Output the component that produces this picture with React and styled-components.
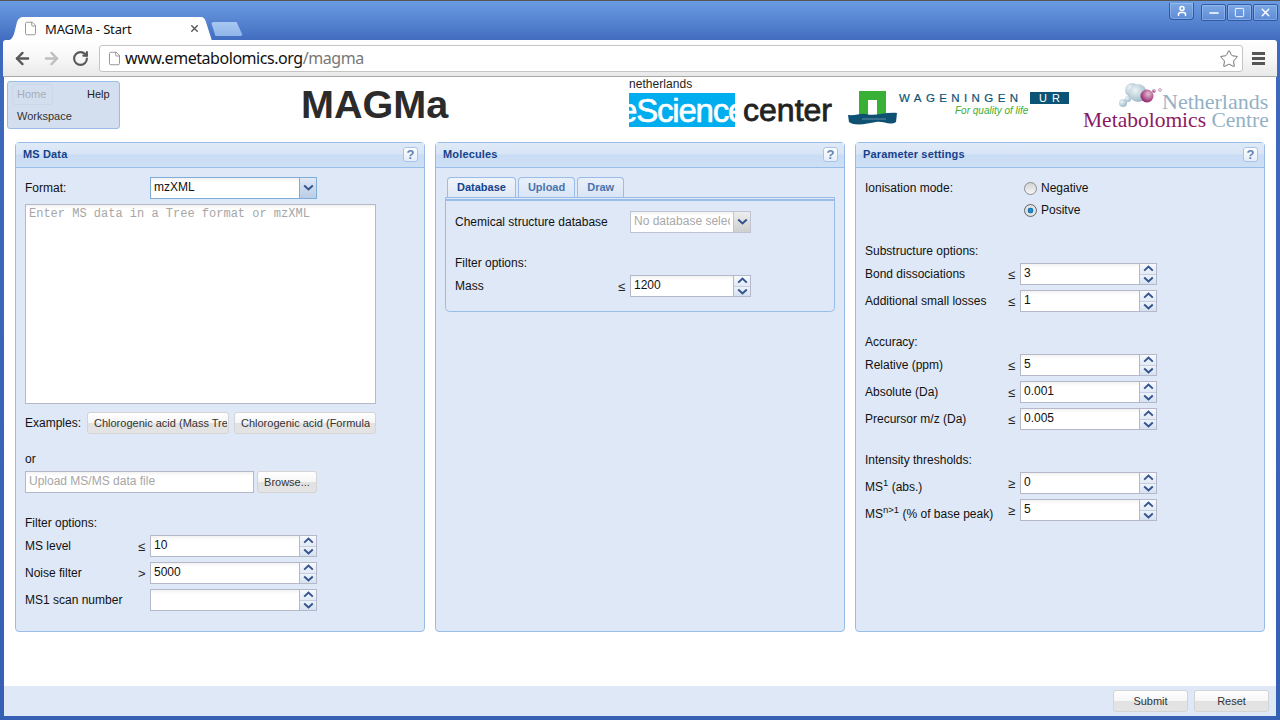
import React from "react";
import styled, { createGlobalStyle } from "styled-components";
import { ArrowLeft, ArrowRight, RotateCw, Star, File, User, Minus, Square, X } from "lucide-react";

const GlobalStyle = createGlobalStyle`
  html, body { margin: 0; padding: 0; overflow: hidden; background: #fff; }
  * { box-sizing: border-box; }
  body { font: 12px "Liberation Sans", Arial, sans-serif; color: #111; }
`;

const Chevron = ({ up, size = 11 }) => (
  <svg width={size} height={size * 0.64} viewBox="0 0 11 7">
    <path d={up ? "M1.2 5.6 L5.5 1.6 L9.8 5.6" : "M1.2 1.4 L5.5 5.4 L9.8 1.4"} fill="none" stroke="#34548f" strokeWidth="2" />
  </svg>
);

const HelpButton = () => <Help>?</Help>;

const SpinField = ({ value, width = 167 }) => (
  <FieldBox $w={width}>
    <FieldText>{value}</FieldText>
    <Spinner>
      <SpinPart><Chevron up /></SpinPart>
      <SpinPart $lower><Chevron /></SpinPart>
    </Spinner>
  </FieldBox>
);

const Row = ({ label, sign, value, labelWidth, width, low }) => (
  <RowWrap $top={5}>
    <RowLabel $w={labelWidth} $low={low}>{label}</RowLabel>
    <Sign>{sign}</Sign>
    <SpinField value={value} width={width} />
  </RowWrap>
);

const Panel = ({ title, children }) => (
  <PanelBox>
    <PanelHead>
      <PanelTitle>{title}</PanelTitle>
      <HelpButton />
    </PanelHead>
    {children}
  </PanelBox>
);

export default function App() {
  return (
    <Frame>
      <GlobalStyle />
      <TabStrip>
        <BrowserTab>
          <File size={15} strokeWidth={1.2} color="#777" fill="#fff" />
          <TabTitle>MAGMa - Start</TabTitle>
          <X size={11} strokeWidth={3} color="#555" />
        </BrowserTab>
        <NewTab />
        <WindowControls>
          <ProfileBtn><User size={12} strokeWidth={3} color="#fff" /></ProfileBtn>
          <WinBtn><Minus size={14} strokeWidth={2.5} color="#fff" /></WinBtn>
          <WinBtn><Square size={11} strokeWidth={2} color="#fff" /></WinBtn>
          <WinBtn><X size={13} strokeWidth={2.5} color="#fff" /></WinBtn>
        </WindowControls>
      </TabStrip>

      <Toolbar>
        <NavIcon><ArrowLeft size={19} strokeWidth={3} color="#595959" /></NavIcon>
        <NavIcon><ArrowRight size={19} strokeWidth={3} color="#bfbfbf" /></NavIcon>
        <NavIcon><RotateCw size={17} strokeWidth={3} color="#595959" /></NavIcon>
        <Omnibox>
          <File size={15} strokeWidth={1.2} color="#777" />
          <Url>www.emetabolomics.org<UrlPath>/magma</UrlPath></Url>
          <Star size={20} strokeWidth={1.1} color="#666" />
        </Omnibox>
        <Burger><i /><i /><i /></Burger>
      </Toolbar>

      <Page>
        <Header>
          <Menu>
            <HomeItem>Home</HomeItem>
            <HelpItem>Help</HelpItem>
            <WorkspaceItem>Workspace</WorkspaceItem>
          </Menu>
          <AppTitle>MAGMa</AppTitle>
          <EScience>
            <EsTop>netherlands</EsTop>
            <EsLine>
              <EsBox><EsWord>eScience</EsWord></EsBox>
              <EsCenter>center</EsCenter>
            </EsLine>
          </EScience>
          <Wur>
            <svg width="50" height="35" viewBox="0 0 50 35">
              <path d="M11 0 H38 V24 H29 V9 H20 V24 H11 Z" fill="#38b035" />
              <path d="M0 24 C8 25 14 21 20 23.500 C28 25 38 21 49 22 L48 31 C42 35 36 30 28 31 C20 32 8 36 1 31 Z" fill="#0f5173" />
              <path d="M14 28 H38" stroke="#fff" strokeWidth="0.6" opacity="0.6" />
            </svg>
            <WurText>
              <WurTop>
                <WurName>WAGENINGEN</WurName>
                <WurBadge>UR</WurBadge>
              </WurTop>
              <WurSlogan>For quality of life</WurSlogan>
            </WurText>
          </Wur>
          <Nmc>
            <NmcBubbles>
              <svg width="48" height="30" viewBox="0 0 48 30">
                <defs>
                  <radialGradient id="ball" cx="35%" cy="35%" r="70%">
                    <stop offset="0" stopColor="#eef3f6" />
                    <stop offset="1" stopColor="#9db8c8" />
                  </radialGradient>
                  <radialGradient id="plum" cx="60%" cy="35%" r="70%">
                    <stop offset="0" stopColor="#e7bdd5" />
                    <stop offset="1" stopColor="#8b1a63" />
                  </radialGradient>
                </defs>
                <circle cx="6" cy="21" r="4" fill="url(#ball)" />
                <circle cx="11" cy="17" r="3" fill="url(#ball)" />
                <circle cx="15" cy="8" r="7" fill="url(#ball)" />
                <circle cx="21" cy="11" r="9" fill="url(#ball)" />
                <circle cx="30" cy="14" r="6.5" fill="url(#plum)" />
                <circle cx="37" cy="9" r="1.8" fill="url(#plum)" />
                <circle cx="43" cy="8" r="1.4" fill="none" stroke="#b56a98" strokeWidth="0.7" />
              </svg>
            </NmcBubbles>
            <NmcTop>Netherlands</NmcTop>
            <NmcBottom><NmcPlum>Metabolomics</NmcPlum> Centre</NmcBottom>
          </Nmc>
        </Header>

        <Panels>
          <Panel title="MS Data">
            <PanelBody>
              <RowWrap>
                <RowLabel $w={125}>Format:</RowLabel>
                <ComboBox $focus>
                  <ComboText>mzXML</ComboText>
                  <ComboTrigger $focus><Chevron /></ComboTrigger>
                </ComboBox>
              </RowWrap>
              <MsArea>Enter MS data in a Tree format or mzXML</MsArea>
              <ExampleRow>
                <ExampleLabel>Examples:</ExampleLabel>
                <GreyButton $w={142} $right={1}><Clip>Chlorogenic acid (Mass Tree)</Clip></GreyButton>
                <GreyButton $w={142} $right={5}><Clip>Chlorogenic acid (Formula)</Clip></GreyButton>
              </ExampleRow>
              <Caption $top={18}>or</Caption>
              <UploadRow>
                <UploadInput>Upload MS/MS data file</UploadInput>
                <GreyButton $w={60}>Browse...</GreyButton>
              </UploadRow>
              <Caption $top={23}>Filter options:</Caption>
              <Row label="MS level" sign="≤" value="10" labelWidth={113} />
              <Row label="Noise filter" sign=">" value="5000" labelWidth={113} />
              <Row label="MS1 scan number" sign="" value="" labelWidth={113} />
            </PanelBody>
          </Panel>

          <Panel title="Molecules">
            <TabsArea>
              <InnerTabs>
                <InnerTab $active>Database</InnerTab>
                <InnerTab>Upload</InnerTab>
                <InnerTab>Draw</InnerTab>
              </InnerTabs>
              <TabBar />
              <TabBody>
                <RowWrap>
                  <RowLabel $w={175}>Chemical structure database</RowLabel>
                  <ComboBox $w={121}>
                    <ComboText $disabled><Clip>No database selected</Clip></ComboText>
                    <ComboTrigger><Chevron /></ComboTrigger>
                  </ComboBox>
                </RowWrap>
                <Caption $top={23}>Filter options:</Caption>
                <Row label="Mass" sign="≤" value="1200" labelWidth={163} width={121} />
              </TabBody>
            </TabsArea>
          </Panel>

          <Panel title="Parameter settings">
            <PanelBody>
              <RadioRow>
                <RadioLabel>Ionisation mode:</RadioLabel>
                <RadioDot />
                <span>Negative</span>
              </RadioRow>
              <RadioRow>
                <RadioLabel />
                <RadioDot $checked />
                <span>Positve</span>
              </RadioRow>
              <Caption $top={23}>Substructure options:</Caption>
              <Row label="Bond dissociations" sign="≤" value="3" labelWidth={143} width={137} />
              <Row label="Additional small losses" sign="≤" value="1" labelWidth={143} width={137} />
              <Caption $top={23}>Accuracy:</Caption>
              <Row label="Relative (ppm)" sign="≤" value="5" labelWidth={143} width={137} />
              <Row label="Absolute (Da)" sign="≤" value="0.001" labelWidth={143} width={137} />
              <Row label="Precursor m/z (Da)" sign="≤" value="0.005" labelWidth={143} width={137} />
              <Caption $top={23}>Intensity thresholds:</Caption>
              <Row label={<>MS<Sup>1</Sup> (abs.)</>} sign="≥" value="0" labelWidth={143} width={137} low />
              <Row label={<>MS<Sup>n&gt;1</Sup> (% of base peak)</>} sign="≥" value="5" labelWidth={143} width={137} low />
            </PanelBody>
          </Panel>
        </Panels>

        <Footer>
          <GreyButton $w={75}>Submit</GreyButton>
          <GreyButton $w={75}>Reset</GreyButton>
        </Footer>
      </Page>
    </Frame>
  );
}

const Frame = styled.div`
  width: 1280px;
  height: 720px;
  display: flex;
  flex-direction: column;
  padding: 0 4px 4px;
  border-top: 1px solid #555;
  background: linear-gradient(#6a9be2 0, #5f8ed8 12px, #3f69bd 42px, #3560b4 100%);
`;

const TabStrip = styled.div`
  height: 39px;
  display: flex;
  align-items: flex-end;
  flex: none;
`;

const BrowserTab = styled.div`
  width: 208px;
  height: 24px;
  margin-bottom: -1px;
  display: flex;
  align-items: center;
  padding: 0 12px 1px 19px;
  background: #fff;
  clip-path: path("M0 24 C6 24 8 22 10 17 L13 5 C14 2 16 0 20 0 L196 0 C200 0 201 2 202 5 L208 24 Z");
`;

const TabTitle = styled.span`
  flex: 1;
  margin-left: 7px;
  font: 13px "Noto Sans", sans-serif;
  letter-spacing: -0.15px;
  color: #111;
`;

const NewTab = styled.div`
  width: 32px;
  height: 14px;
  margin: 0 0 4px -1px;
  background: linear-gradient(#a9c8f3, #8fb5ea);
  border-radius: 3px;
  clip-path: polygon(0 0, 80% 0, 100% 100%, 14% 100%);
`;

const WindowControls = styled.div`
  margin-left: auto;
  align-self: flex-start;
  margin-right: -2px;
  display: flex;
  gap: 1px;
`;

const WinBtn = styled.div`
  width: 25px;
  height: 17px;
  margin-top: 3px;
  display: flex;
  align-items: center;
  justify-content: center;
  border: 1px solid #2f5aa8;
  border-radius: 2px;
  background: linear-gradient(#7ba7e6, #5e8cd6);
  box-shadow: inset 0 0 0 1px rgba(255, 255, 255, 0.2);
`;

const ProfileBtn = styled(WinBtn)`
  margin: 2px 6px 0 0;
  border-top: none;
  border-radius: 0 0 4px 4px;
`;

const Toolbar = styled.div`
  height: 37px;
  margin: 0 -1px;
  flex: none;
  display: flex;
  align-items: center;
  padding: 1px 0 0 5px;
  background: linear-gradient(#fff, #f6f6f6 55%, #e8e8e8);
  border-bottom: 1px solid #a8a8a8;
  border-radius: 3px 3px 0 0;
`;

const NavIcon = styled.div`
  width: 29px;
  display: flex;
  justify-content: center;
`;

const Omnibox = styled.div`
  width: 1144px;
  height: 27px;
  margin-left: 4px;
  display: flex;
  align-items: center;
  padding: 0 3px 0 7px;
  background: #fff;
  border: 1px solid #c4c4c4;
  border-radius: 3px;
`;

const Url = styled.span`
  flex: 1;
  margin-left: 3px;
  padding-bottom: 2px;
  font: 16px "Noto Sans", sans-serif;
  letter-spacing: -0.45px;
  color: #111;
`;

const UrlPath = styled.span`
  color: #777;
`;

const Burger = styled.div`
  width: 13px;
  margin-left: 9px;
  display: flex;
  flex-direction: column;
  gap: 2px;
  i { display: block; height: 3px; background: #555; }
`;

const Page = styled.div`
  flex: 1;
  display: flex;
  flex-direction: column;
  background: #fff;
`;

const Header = styled.div`
  height: 65px;
  flex: none;
  display: flex;
  align-items: flex-start;
`;

const Menu = styled.div`
  width: 113px;
  height: 48px;
  margin: 4px 0 0 3px;
  display: grid;
  grid-template-columns: 75px 1fr;
  grid-template-rows: 26px 1fr;
  padding: 2px 0 0 4px;
  font-size: 11px;
  background: #d3dfef;
  border: 1px solid #99bce8;
  border-radius: 3px;
`;

const HomeItem = styled.div`
  width: 41px;
  height: 21px;
  padding: 3px 0 0 4px;
  color: #a6adb8;
  border: 1px solid #ccd8e8;
  border-radius: 3px;
`;

const HelpItem = styled.div`
  padding-top: 4px;
  color: #222;
`;

const WorkspaceItem = styled.div`
  grid-column: 1 / span 2;
  padding: 0 0 0 5px;
  color: #333;
`;

const AppTitle = styled.h1`
  width: 147px;
  margin: 4px 0 0 181px;
  font: bold 39.6px/46px "Liberation Sans", sans-serif;
  color: #2b2b2b;
  white-space: nowrap;
`;

const EScience = styled.div`
  width: 203px;
  margin-left: 181px;
`;

const EsTop = styled.div`
  height: 16px;
  font: 12px/14px "Liberation Sans", sans-serif;
  letter-spacing: 0.05px;
  color: #222;
`;

const EsLine = styled.div`
  display: flex;
  align-items: center;
`;

const EsBox = styled.div`
  width: 107px;
  height: 34px;
  overflow: hidden;
  background: #00aeef;
  color: #fff;
`;

const EsWord = styled.div`
  margin-left: -10px;
  font: 33px/35px "Liberation Sans", sans-serif;
  letter-spacing: -1.2px;
  -webkit-text-stroke: 0.6px #fff;
  white-space: nowrap;
`;

const EsCenter = styled.div`
  margin-left: 8px;
  font: 32px/34px "Liberation Sans", sans-serif;
  -webkit-text-stroke: 0.8px #222;
  color: #222;
`;

const Wur = styled.div`
  width: 221px;
  margin: 14px 0 0 16px;
  display: flex;
`;

const WurText = styled.div`
  margin: 1px 0 0 1px;
`;

const WurTop = styled.div`
  display: flex;
  align-items: center;
`;

const WurName = styled.div`
  width: 131px;
  font: 11.5px/12px "Liberation Sans", sans-serif;
  letter-spacing: 4.4px;
  -webkit-text-stroke: 0.2px #0c5475;
  color: #0c5475;
  white-space: nowrap;
`;

const WurBadge = styled.div`
  width: 39px;
  height: 12px;
  padding-left: 9px;
  font: 11px/12px "Liberation Sans", sans-serif;
  letter-spacing: 5px;
  color: #fff;
  background: #0c5475;
  white-space: nowrap;
  overflow: hidden;
`;

const WurSlogan = styled.div`
  margin-left: 56px;
  font: italic 10px/13px "Liberation Sans", sans-serif;
  color: #41ad2b;
  white-space: nowrap;
`;

const Nmc = styled.div`
  position: relative;
  width: 185px;
  margin: 16px 0 0 14px;
  font-family: "Liberation Serif", serif;
  color: #93b1c6;
  white-space: nowrap;
`;

const NmcBubbles = styled.div`
  position: absolute;
  left: 34px;
  top: -11px;
`;

const NmcTop = styled.div`
  margin-left: 79px;
  font-size: 22px;
  line-height: 18px;
`;

const NmcBottom = styled.div`
  font-size: 21.5px;
  line-height: 18px;
`;

const NmcPlum = styled.span`
  color: #8b1a63;
`;

const Panels = styled.div`
  display: flex;
  gap: 10px;
  padding-left: 11px;
  flex: none;
`;

const PanelBox = styled.section`
  width: 410px;
  height: 490px;
  background: #dfe8f6;
  border: 1px solid #99bce8;
  border-radius: 4px;
`;

const PanelHead = styled.div`
  height: 25px;
  display: flex;
  align-items: center;
  justify-content: space-between;
  padding: 0 6px 2px 7px;
  background: linear-gradient(#dfeaf7, #d8e5f6 45%, #c9dcf4 50%, #cee0f5);
  border-bottom: 1px solid #99bce8;
`;

const PanelTitle = styled.div`
  font: bold 11px "Liberation Sans", sans-serif;
  letter-spacing: 0.15px;
  color: #15428b;
`;

const Help = styled.div`
  width: 15px;
  height: 15px;
  text-align: center;
  font: bold 13px/14px "Liberation Sans", sans-serif;
  color: #6484b5;
  background: linear-gradient(#fff, #e4edf9);
  border: 1px solid #a9c4e8;
  border-radius: 3px;
`;

const PanelBody = styled.div`
  padding: 9px 9px 0;
`;

const RowWrap = styled.div`
  height: 22px;
  margin-top: ${(p) => p.$top || 0}px;
  display: flex;
  align-items: center;
`;

const RowLabel = styled.div`
  width: ${(p) => p.$w}px;
  flex: none;
  padding-top: ${(p) => (p.$low ? 8 : 0)}px;
  white-space: nowrap;
  font-size: 12px;
`;

const Sign = styled.div`
  width: 12px;
  flex: none;
  font-size: 13px;
  color: #222;
`;

const Sup = styled.sup`
  font-size: 9.5px;
  line-height: 0;
`;

const FieldBox = styled.div`
  width: ${(p) => p.$w}px;
  height: 22px;
  display: flex;
  background: linear-gradient(#f2f2f2, #fff 4px);
  border: 1px solid #b5b8c8;
`;

const FieldText = styled.div`
  flex: 1;
  padding: 2px 3px;
  font-size: 12px;
  line-height: 15px;
`;

const Spinner = styled.div`
  width: 17px;
  display: flex;
  flex-direction: column;
  border-left: 1px solid #b5b8c8;
`;

const SpinPart = styled.div`
  flex: 1;
  display: flex;
  align-items: center;
  justify-content: center;
  background: ${(p) => (p.$lower ? "linear-gradient(#eef3fa, #d5e1f1)" : "linear-gradient(#f7f9fd, #e2eaf6)")};
  border-top: ${(p) => (p.$lower ? "1px solid #c5cfdf" : "none")};
`;

const ComboBox = styled.div`
  width: ${(p) => p.$w || 167}px;
  height: 22px;
  display: flex;
  background: linear-gradient(#f2f2f2, #fff 4px);
  border: 1px solid ${(p) => (p.$focus ? "#7eadd9" : "#c0c4d2")};
`;

const ComboText = styled.div`
  flex: 1;
  min-width: 0;
  padding: 2px 3px;
  font-size: 12px;
  line-height: 15px;
  color: ${(p) => (p.$disabled ? "#a8a8a8" : "#111")};
`;

const ComboTrigger = styled.div`
  width: 17px;
  display: flex;
  align-items: flex-start;
  padding-top: 6px;
  justify-content: center;
  background: ${(p) => (p.$focus ? "linear-gradient(#dfe8f6, #b9cde6)" : "linear-gradient(#eee, #cfcfcf)")};
  border-left: 1px solid ${(p) => (p.$focus ? "#7eadd9" : "#c0c4d2")};
`;

const Clip = styled.div`
  overflow: hidden;
  white-space: nowrap;
  text-align: left;
`;

const MsArea = styled.div`
  width: 351px;
  height: 200px;
  margin-top: 5px;
  padding: 2px 3px;
  font: 12px/15px "Liberation Mono", monospace;
  color: #a6a6a6;
  background: linear-gradient(#f2f2f2, #fff 4px);
  border: 1px solid #b5b8c8;
`;

const ExampleRow = styled.div`
  height: 22px;
  margin-top: 8px;
  display: flex;
  align-items: center;
  gap: 5px;
`;

const ExampleLabel = styled.div`
  width: 57px;
  font-size: 12px;
`;

const GreyButton = styled.div`
  width: ${(p) => p.$w}px;
  height: 22px;
  flex: none;
  padding: 0 ${(p) => p.$right ?? 6}px 0 6px;
  text-align: center;
  font-size: 11px;
  line-height: 20px;
  color: #333;
  background: linear-gradient(#fff, #f6f6f6 48%, #e2e2e2 52%, #e4e4e4);
  border: 1px solid #d4d4d4;
  border-radius: 3px;
`;

const Caption = styled.div`
  height: 14px;
  margin-top: ${(p) => p.$top}px;
  font-size: 12px;
  line-height: 14px;
`;

const UploadRow = styled.div`
  height: 22px;
  margin-top: 5px;
  display: flex;
  gap: 3px;
`;

const UploadInput = styled.div`
  width: 229px;
  padding: 2px 3px;
  font-size: 12px;
  line-height: 15px;
  color: #a6a6a6;
  background: linear-gradient(#f2f2f2, #fff 4px);
  border: 1px solid #b5b8c8;
`;

const TabsArea = styled.div`
  padding: 9px 9px 0;
`;

const InnerTabs = styled.div`
  height: 20px;
  padding-left: 2px;
  display: flex;
  gap: 2px;
`;

const InnerTab = styled.div`
  padding: 0 9px;
  font: bold 11px/19px "Liberation Sans", sans-serif;
  color: ${(p) => (p.$active ? "#15428b" : "#4a74ad")};
  background: ${(p) => (p.$active ? "linear-gradient(#f0f5fb, #dfe8f6)" : "linear-gradient(#e9f0fa, #d9e5f6)")};
  border: 1px solid #99bce8;
  border-bottom: none;
  border-radius: 4px 4px 0 0;
`;

const TabBar = styled.div`
  height: 4px;
  background: #dfe8f6;
  border: 1px solid #99bce8;
  border-bottom-width: 2px;
  border-top-width: 1px;
`;

const TabBody = styled.div`
  height: 111px;
  padding: 10px 9px 0;
  border: 1px solid #99bce8;
  border-top: none;
  border-radius: 0 0 5px 5px;
`;

const RadioRow = styled.div`
  height: 22px;
  display: flex;
  align-items: center;
  font-size: 12px;
`;

const RadioLabel = styled.div`
  width: 159px;
`;

const RadioDot = styled.div`
  width: 13px;
  height: 13px;
  margin-right: 4px;
  border-radius: 50%;
  border: 1px solid ${(p) => (p.$checked ? "#666" : "#8d8d8d")};
  background: ${(p) =>
    p.$checked
      ? "radial-gradient(circle, #2b9ad8 0, #0f6fae 2.6px, #e8e8e8 3.2px, #cfcfcf 100%)"
      : "linear-gradient(#d4d4d4, #f6f6f6)"};
`;

const Footer = styled.div`
  height: 30px;
  margin-top: auto;
  display: flex;
  justify-content: flex-end;
  align-items: center;
  gap: 6px;
  padding-right: 7px;
  background: #dfe8f6;
`;
